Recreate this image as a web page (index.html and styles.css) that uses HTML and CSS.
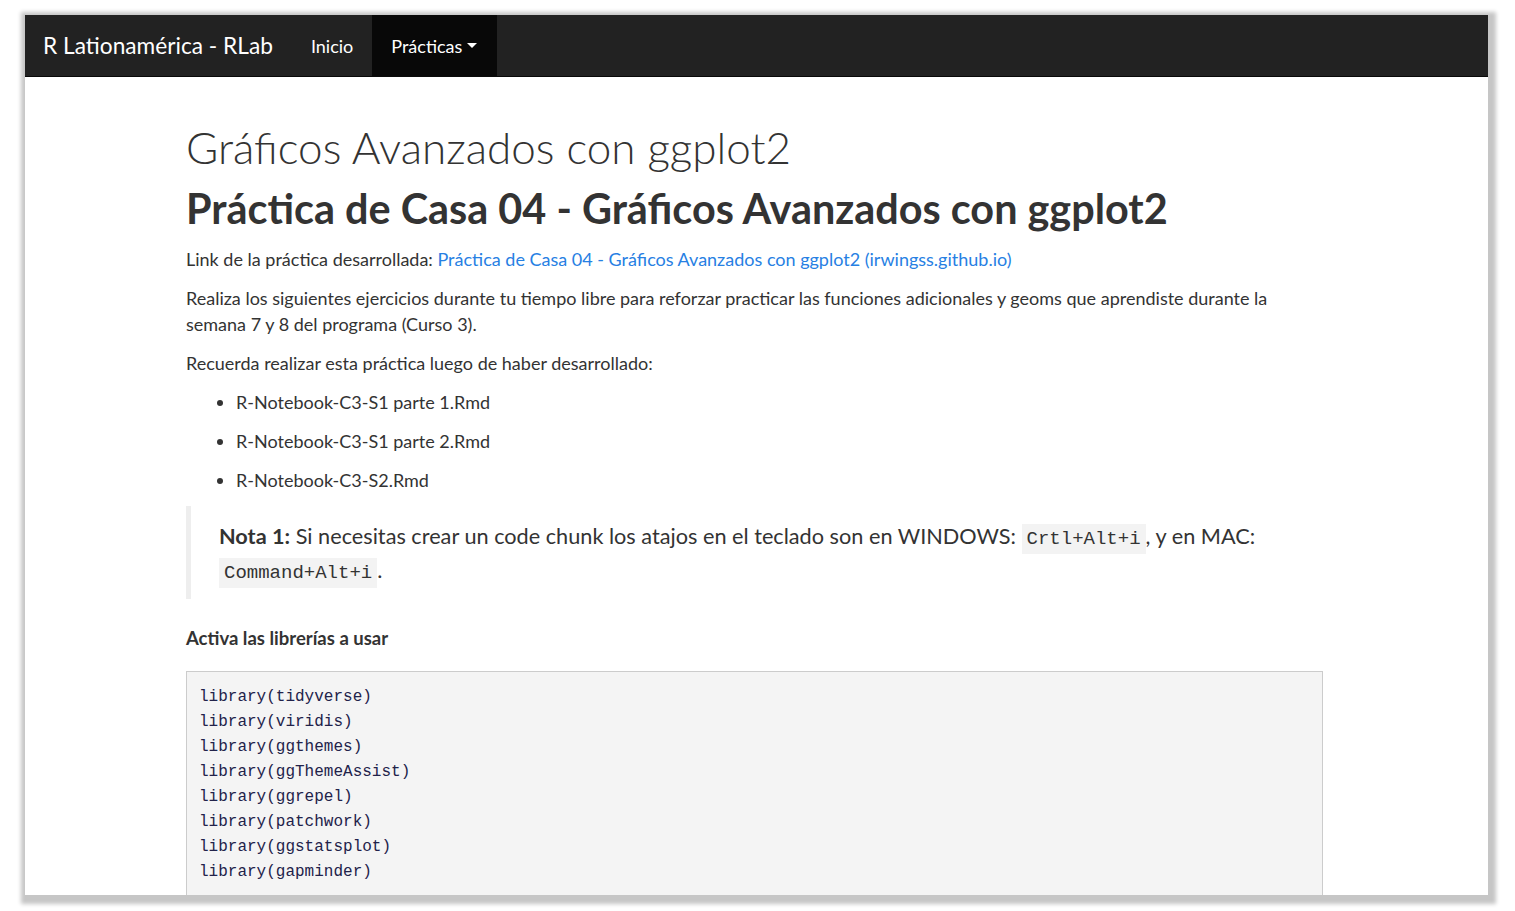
FILE: index.html
```html
<!DOCTYPE html>
<html lang="es">
<head>
<meta charset="utf-8">
<title>Gráficos Avanzados con ggplot2</title>
<link rel="stylesheet" href="styles.css">
</head>
<body>
<div class="window">
  <nav class="navbar">
    <a class="brand" href="#">R Lationamérica - RLab</a>
    <ul class="nav">
      <li><a href="#">Inicio</a></li>
      <li class="active"><a href="#">Prácticas <span class="caret"></span></a></li>
    </ul>
  </nav>
  <main class="container">
    <h1 class="title">Gráficos Avanzados con ggplot2</h1>
    <h1 class="heading">Práctica de Casa 04 - Gráficos Avanzados con ggplot2</h1>
    <p>Link de la práctica desarrollada: <a href="#">Práctica de Casa 04 - Gráficos Avanzados con ggplot2 (irwingss.github.io)</a></p>
    <p>Realiza los siguientes ejercicios durante tu tiempo libre para reforzar practicar las funciones adicionales y geoms que aprendiste durante la semana 7 y 8 del programa (Curso 3).</p>
    <p>Recuerda realizar esta práctica luego de haber desarrollado:</p>
    <ul class="list">
      <li>R-Notebook-C3-S1 parte 1.Rmd</li>
      <li>R-Notebook-C3-S1 parte 2.Rmd</li>
      <li>R-Notebook-C3-S2.Rmd</li>
    </ul>
    <blockquote>
      <p><strong>Nota 1:</strong> Si necesitas crear un code chunk los atajos en el teclado son en WINDOWS: <code>Crtl+Alt+i</code>, y en MAC: <code>Command+Alt+i</code>.</p>
    </blockquote>
    <h4>Activa las librerías a usar</h4>
<pre><code>library(tidyverse)
library(viridis)
library(ggthemes)
library(ggThemeAssist)
library(ggrepel)
library(patchwork)
library(ggstatsplot)
library(gapminder)</code></pre>
  </main>
</div>
</body>
</html>
```

FILE: styles.css
```css
html {
  overflow: hidden;
}

html, body {
  margin: 0;
  padding: 0;
  background: #ffffff;
}

body {
  min-height: 911px;
  padding-bottom: 16px;
  font-family: "Lato", "Liberation Sans", sans-serif;
  color: #333333;
}

.window {
  margin: 15px 0 0 25px;
  width: 1463px;
  height: 880px;
  overflow: hidden;
  background: #ffffff;
  box-shadow: 2px 3px 4px 6px #c6c6c6;
}

.navbar {
  display: flex;
  align-items: stretch;
  height: 61px;
  background: #222222;
  border-bottom: 1px solid #090909;
}

.brand {
  display: flex;
  align-items: center;
  padding: 0 19px 0 18px;
  color: #ffffff;
  font-size: 22.7px;
  text-decoration: none;
}

.nav {
  display: flex;
  list-style: none;
  margin: 0;
  padding: 0;
}

.nav li a {
  display: flex;
  align-items: center;
  height: 100%;
  padding: 0 19px;
  color: #ffffff;
  font-size: 18px;
  text-decoration: none;
}

.nav li.active a {
  background: #080808;
  padding-right: 20px;
}

.caret {
  display: inline-block;
  width: 0;
  height: 0;
  margin-left: 5px;
  border-top: 5px solid #ffffff;
  border-left: 5px solid transparent;
  border-right: 5px solid transparent;
}

.container {
  width: 1137px;
  margin: 0 0 0 161px;
  padding-top: 40px;
  font-size: 18px;
  line-height: 26px;
}

.title {
  font-weight: 300;
  font-size: 44px;
  line-height: 60px;
  margin: 0;
}

.heading {
  font-weight: 700;
  font-size: 41.4px;
  line-height: 56px;
  margin: 3px 0 10px;
}

p {
  margin: 0 0 13px;
}

a {
  color: #2780e3;
  text-decoration: none;
}

.list {
  margin: 0 0 13px;
  padding-left: 50px;
}

.list li {
  line-height: 26px;
  margin-bottom: 13px;
}

blockquote {
  margin: 0 0 26px;
  padding: 13px 26px 12px 28px;
  border-left: 5px solid #eeeeee;
  font-size: 21.7px;
  line-height: 34px;
}

blockquote p {
  margin: 0;
}

code {
  font-family: "Liberation Mono", "DejaVu Sans Mono", monospace;
  font-size: 19px;
  line-height: 1;
  background: #f3f3f3;
  color: #333333;
  padding: 4px 5px;
}

h4 {
  font-size: 18.5px;
  font-weight: 700;
  margin: 0 0 20px;
}

pre {
  margin: 0;
  padding: 13px 12px 40px;
  background: #f4f4f4;
  border: 1px solid #cccccc;
  font-family: "Liberation Mono", "DejaVu Sans Mono", monospace;
  font-size: 16px;
  line-height: 25px;
  color: #22224a;
}

pre code {
  background: none;
  padding: 0;
  font-size: 16px;
  line-height: 25px;
  color: inherit;
}
```
